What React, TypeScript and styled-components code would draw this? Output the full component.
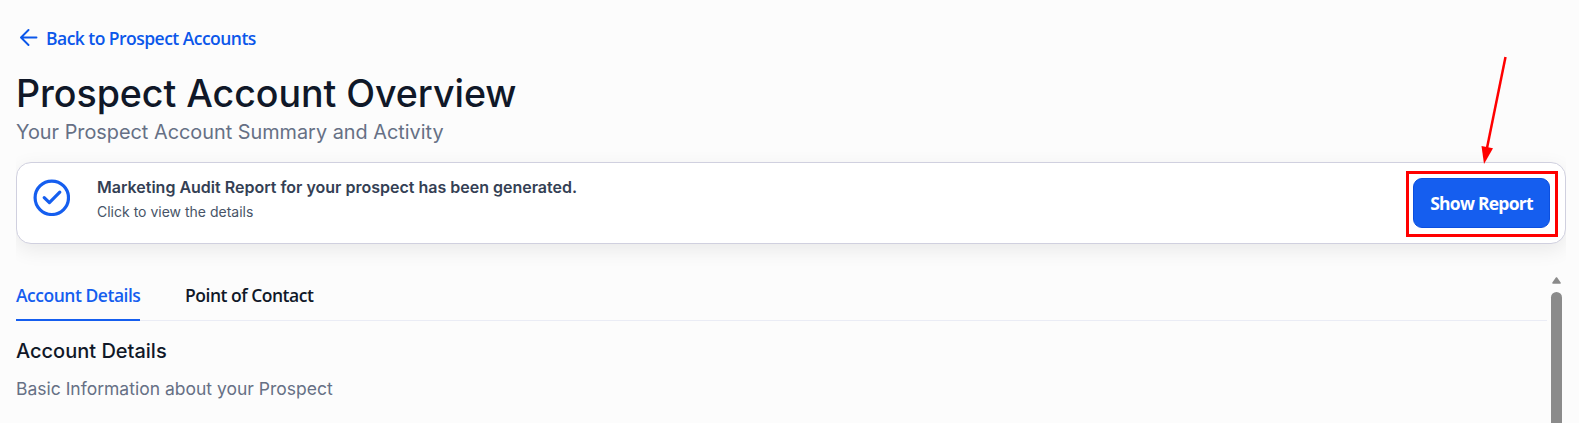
import { useState } from "react";
import styled, { createGlobalStyle } from "styled-components";

const GlobalStyle = createGlobalStyle`
  *, *::before, *::after {
    box-sizing: border-box;
  }

  body {
    margin: 0;
    background-color: #fcfcfc;
    font-family: Inter, sans-serif;
    overflow: hidden;
  }

  h1, h2, p {
    margin: 0;
  }
`;

// Page
const Page = styled.div`
  position: relative;
  height: 423px;
  padding: 25px 13px 0 16px;
  display: flex;
  flex-direction: column;
  overflow: hidden;
`;

const BackLink = styled.a`
  display: flex;
  align-items: center;
  align-self: flex-start;
  height: 26px;
  padding-left: 3px;
  gap: 8px;
  color: #0b57ea;
  font-family: "Open Sans", sans-serif;
  font-size: 17.5px;
  font-weight: 600;
  letter-spacing: -0.53px;
  white-space: nowrap;
  text-decoration: none;
  cursor: pointer;
`;

const BackIcon = styled.svg`
  width: 19px;
  height: 18px;
`;

const Title = styled.h1`
  margin-top: 20px;
  color: #101828;
  font-size: 37.6px;
  font-weight: 480;
  letter-spacing: -0.05px;
  line-height: 45px;
  white-space: nowrap;
`;

const Subtitle = styled.p`
  margin-top: 1px;
  color: #667085;
  font-size: 19.85px;
  line-height: 30px;
  white-space: nowrap;
`;

// Report banner
const BannerArea = styled.div`
  flex: none;
  height: 129px;
  margin-top: -3px;
  padding-top: 18px;
  overflow: hidden;
`;

const Banner = styled.section`
  display: flex;
  height: 82px;
  padding: 0 7px 0 16px;
  border: 1px solid #d0d0df;
  border-radius: 15px;
  background-color: #fff;
  box-shadow: 0 6px 20px rgba(0, 0, 0, 0.08);
`;

const CheckIcon = styled.svg`
  flex: none;
  width: 37px;
  height: 37px;
  margin-top: 16px;
`;

const BannerText = styled.div`
  flex: 1;
  margin: 13px 0 0 27px;
`;

const BannerTitle = styled.p`
  color: #344054;
  font-size: 16px;
  font-weight: 600;
  line-height: 22px;
`;

const BannerHint = styled.p`
  margin-top: 3px;
  color: #475467;
  font-size: 14px;
  line-height: 22px;
`;

const Highlight = styled.div`
  width: 152px;
  height: 66px;
  margin-top: 8px;
  padding: 4px;
  border: 3px solid #ff0000;
`;

// Arrow drawn over the page, pointing at the report button
const Pointer = styled.svg`
  position: absolute;
  top: 50px;
  right: 64px;
  width: 40px;
  height: 116px;
  pointer-events: none;
`;

const ReportButton = styled.button`
  width: 137px;
  height: 50px;
  padding: 0;
  border: 1px solid #0b4fe0;
  border-radius: 9px;
  background-color: #155eef;
  color: #fff;
  font-family: "Open Sans", sans-serif;
  font-size: 17.5px;
  font-weight: 700;
  letter-spacing: -0.75px;
  white-space: nowrap;
  cursor: pointer;
`;

// Tabs and details
const Details = styled.div`
  display: flex;
  flex: 1;
  justify-content: space-between;
`;

const DetailsContent = styled.div`
  width: 1531px;
`;

const TabList = styled.div`
  display: flex;
  gap: 45px;
  height: 48px;
  border-bottom: 1px solid #eaecf5;
`;

const Tab = styled.button<{ $active: boolean; $width: number }>`
  flex: none;
  width: ${(props) => props.$width}px;
  height: 48px;
  padding: 0 0 2px;
  border: none;
  border-bottom: 2px solid ${(props) => (props.$active ? "#155eef" : "transparent")};
  background: none;
  color: ${(props) => (props.$active ? "#155eef" : "#101828")};
  font-family: "Open Sans", sans-serif;
  font-size: 17.5px;
  font-weight: 600;
  letter-spacing: -0.48px;
  text-align: left;
  white-space: nowrap;
  cursor: pointer;
`;

const SectionTitle = styled.h2`
  margin-top: 15px;
  color: #101828;
  font-size: 20px;
  font-weight: 500;
  line-height: 30px;
`;

const SectionText = styled.p`
  margin-top: 9px;
  color: #667085;
  font-size: 17.5px;
  line-height: 28px;
`;

const Scrollbar = styled.div`
  display: flex;
  flex-direction: column;
  align-items: center;
  width: 11px;
  margin: 4px 4px 0 0;
`;

const ScrollArrow = styled.svg`
  width: 9px;
  height: 7px;
`;

const ScrollThumb = styled.div`
  flex: 1;
  width: 11px;
  margin-top: 8px;
  border-radius: 6px 6px 0 0;
  background-color: #8b8b8b;
`;

const tabs = [
  { name: "Account Details", width: 124 },
  { name: "Point of Contact", width: 130 },
];

export default function App() {
  const [activeTab, setActiveTab] = useState("Account Details");

  return (
    <>
      <GlobalStyle />
      <Page>
        <BackLink>
          <BackIcon viewBox="0 0 19 18" fill="none" stroke="currentColor" strokeWidth="1.9" strokeLinecap="round" strokeLinejoin="round">
            <path d="M17.5 8.5H2.5M9.5 1L2 8.5L9.5 16" />
          </BackIcon>
          Back to Prospect Accounts
        </BackLink>
        <Title>Prospect Account Overview</Title>
        <Subtitle>Your Prospect Account Summary and Activity</Subtitle>

        <BannerArea>
          <Banner>
            <CheckIcon viewBox="0 0 37 37" fill="none" stroke="#155eef" strokeWidth="3.2" strokeLinecap="round" strokeLinejoin="round">
              <circle cx="18.8" cy="18.8" r="16.7" />
              <path d="M11.2 18.6L16.4 23.6L26.8 13.2" />
            </CheckIcon>
            <BannerText>
              <BannerTitle>Marketing Audit Report for your prospect has been generated.</BannerTitle>
              <BannerHint>Click to view the details</BannerHint>
            </BannerText>
            <Highlight>
              <ReportButton>Show Report</ReportButton>
            </Highlight>
          </Banner>
        </BannerArea>

        <Details>
          <DetailsContent>
            <TabList>
              {tabs.map((tab) => (
                <Tab
                  key={tab.name}
                  $active={activeTab === tab.name}
                  $width={tab.width}
                  onClick={() => setActiveTab(tab.name)}
                >
                  {tab.name}
                </Tab>
              ))}
            </TabList>
            <SectionTitle>Account Details</SectionTitle>
            <SectionText>Basic Information about your Prospect</SectionText>
          </DetailsContent>
          <Scrollbar>
            <ScrollArrow viewBox="0 0 9 7">
              <path d="M4.5 1L8 6H1Z" fill="#8b8b8b" stroke="#8b8b8b" strokeWidth="1.6" strokeLinejoin="round" />
            </ScrollArrow>
            <ScrollThumb />
          </Scrollbar>
        </Details>

        <Pointer viewBox="0 0 40 116">
          <path d="M30.5 7L12 98" stroke="#ff0000" strokeWidth="2.5" />
          <path d="M6.5 96L18 98.3L9 114Z" fill="#ff0000" />
        </Pointer>
      </Page>
    </>
  );
}
